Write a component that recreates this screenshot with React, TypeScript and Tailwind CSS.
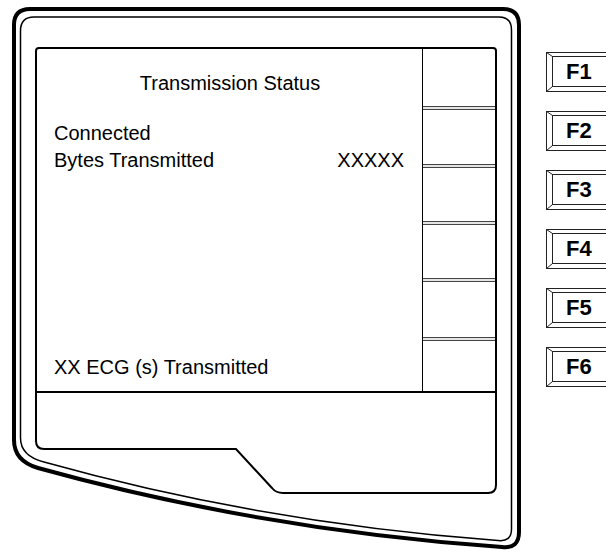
import React from 'react'

// fixed row heights of the soft-key label column, last one fills
const softKeyRows = ['h-[57px]', 'h-[54px]', 'h-[53px]', 'h-[53px]', 'h-[55px]', 'flex-1']
const fKeys = ['F1', 'F2', 'F3', 'F4', 'F5', 'F6']

const Bezel: React.FC = () => (
  <svg
    className="absolute inset-0 pointer-events-none"
    width="606"
    height="554"
    viewBox="0 0 606 554"
    fill="none"
  >
    {/* outer housing */}
    <path
      d="M14 25 Q14 9 30 9 L503 9 Q519 9 519 25 L519 532 Q519 549 502 547 Q262 530 38 468 Q14 461 14 440 Z"
      stroke="#000"
      strokeWidth="4"
      strokeLinejoin="round"
    />
    <path
      d="M20.5 31 Q20.5 17 34 17 L499 17 Q511.5 17 511.5 30 L511.5 529 Q511.5 542 498 540.5 Q262 523 44 462 Q20.5 456 20.5 438 Z"
      stroke="#000"
      strokeWidth="1.5"
      strokeLinejoin="round"
    />
    {/* lower screen notch */}
    <path
      d="M36 392 L36 441 Q36 449 44 449 L236 449 L272 488 Q276 493 283 493 L488 493 Q496 493 496 485 L496 392"
      stroke="#000"
      strokeWidth="2"
    />
  </svg>
)

const FKey: React.FC<{ label: string }> = ({ label }) => (
  <div className="relative shrink-0 w-[70px] h-[40px] flex items-center pl-[20px]">
    <svg
      className="absolute inset-0"
      width="70"
      height="40"
      viewBox="0 0 70 40"
      fill="none"
      stroke="#222"
      strokeWidth="1"
    >
      <rect x="0.5" y="0.5" width="80" height="39" />
      <rect x="6.5" y="4.5" width="80" height="30" />
      <line x1="0.5" y1="0.5" x2="6.5" y2="4.5" />
      <line x1="0.5" y1="39.5" x2="6.5" y2="34.5" />
    </svg>
    <span className="relative text-[22px] font-bold leading-none text-black">
      {label}
    </span>
  </div>
)

export default function App() {
  return (
    <div
      className="relative w-[606px] h-[554px] overflow-hidden bg-white text-black"
      style={{ fontFamily: '"Liberation Sans", Arial, sans-serif' }}
    >
      <Bezel />

      <div className="relative flex pt-[47px] pl-[35px]">
        {/* screen */}
        <div className="shrink-0 w-[462px] h-[346px] border-2 border-black rounded-t-[4px] flex">
          <div className="w-[385px] shrink-0 flex flex-col pl-[17px] pr-[18px] pt-[22px] pb-[12px] text-[20px] leading-[24px]">
            <div className="text-center pl-[2px]">Transmission Status</div>
            <div className="mt-[26px]">Connected</div>
            <div className="mt-[3px] flex justify-between">
              <span>Bytes Transmitted</span>
              <span>XXXXX</span>
            </div>
            <div className="mt-auto">XX ECG (s) Transmitted</div>
          </div>

          {/* soft key labels */}
          <div className="flex-1 border-l-[1.5px] border-black flex flex-col">
            {softKeyRows.map((h, i) => (
              <React.Fragment key={i}>
                {i > 0 && (
                  <div className="shrink-0 h-[4px] border-y border-[#444] bg-[#e5e5e5]" />
                )}
                <div className={`shrink-0 ${h}`} />
              </React.Fragment>
            ))}
          </div>
        </div>

        {/* function keys */}
        <div className="shrink-0 ml-[49px] mt-[5px] flex flex-col gap-[19px]">
          {fKeys.map((f) => (
            <FKey key={f} label={f} />
          ))}
        </div>
      </div>
    </div>
  )
}
